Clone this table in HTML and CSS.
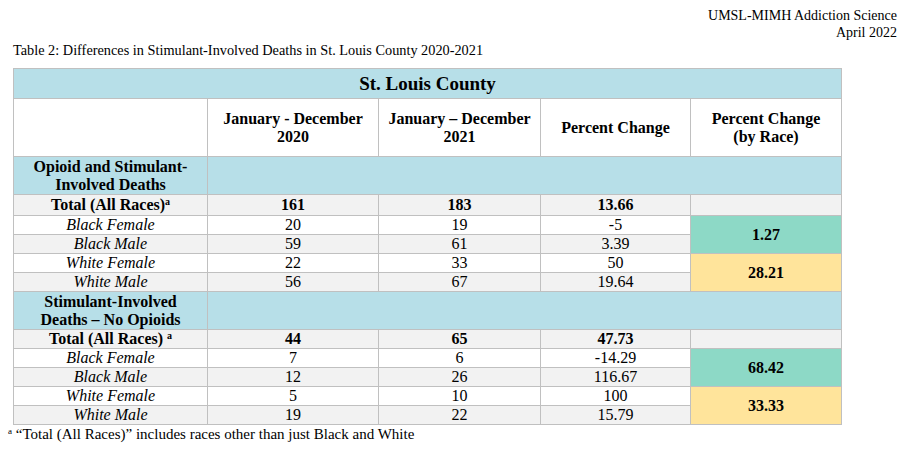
FILE: index.html
```html
<!DOCTYPE html>
<html>
<head>
<meta charset="utf-8">
<link rel="stylesheet" href="styles.css">
</head>
<body>
<div class="org">
  <div>UMSL-MIMH Addiction Science</div>
  <div>April 2022</div>
</div>
<div class="caption">Table 2: Differences in Stimulant-Involved Deaths in St. Louis County 2020-2021</div>
<table class="data">
  <colgroup>
    <col class="c1"><col class="c2"><col class="c3"><col class="c4"><col class="c5">
  </colgroup>
  <tr class="title"><td colspan="5">St. Louis County</td></tr>
  <tr class="head">
    <td></td>
    <td>January - December<br>2020</td>
    <td>January – December<br>2021</td>
    <td>Percent Change</td>
    <td>Percent Change<br>(by Race)</td>
  </tr>
  <tr class="section">
    <td>Opioid and Stimulant-<br>Involved Deaths</td>
    <td colspan="4"></td>
  </tr>
  <tr class="total t1">
    <td>Total (All Races)<sup>a</sup></td><td>161</td><td>183</td><td>13.66</td><td class="blank"></td>
  </tr>
  <tr class="row w"><td class="lab">Black Female</td><td>20</td><td>19</td><td>-5</td><td rowspan="2" class="race teal">1.27</td></tr>
  <tr class="row g"><td class="lab">Black Male</td><td>59</td><td>61</td><td>3.39</td></tr>
  <tr class="row w"><td class="lab">White Female</td><td>22</td><td>33</td><td>50</td><td rowspan="2" class="race yellow">28.21</td></tr>
  <tr class="row g"><td class="lab">White Male</td><td>56</td><td>67</td><td>19.64</td></tr>
  <tr class="section">
    <td>Stimulant-Involved<br>Deaths – No Opioids</td>
    <td colspan="4"></td>
  </tr>
  <tr class="total">
    <td>Total (All Races) <sup>a</sup></td><td>44</td><td>65</td><td>47.73</td><td class="blank"></td>
  </tr>
  <tr class="row w"><td class="lab">Black Female</td><td>7</td><td>6</td><td>-14.29</td><td rowspan="2" class="race teal">68.42</td></tr>
  <tr class="row g"><td class="lab">Black Male</td><td>12</td><td>26</td><td>116.67</td></tr>
  <tr class="row w"><td class="lab">White Female</td><td>5</td><td>10</td><td>100</td><td rowspan="2" class="race yellow">33.33</td></tr>
  <tr class="row g"><td class="lab">White Male</td><td>19</td><td>22</td><td>15.79</td></tr>
</table>
<div class="note"><sup>a</sup> “Total (All Races)” includes races other than just Black and White</div>
</body>
</html>
```
FILE: styles.css
```css
html, body {
  margin: 0;
  padding: 0;
  background: #fff;
}
body, .org, .caption, .data, .data td, .note {
  font-family: "Liberation Serif", Tinos, serif;
}
body {
  color: #000;
  font-size: 15px;
}
.org {
  text-align: right;
  padding: 7px 18px 0 0;
  line-height: 17px;
  font-size: 14px;
}
.caption {
  padding: 0 0 0 13px;
  font-size: 14.3px;
  line-height: 17px;
  height: 17px;
  margin-top: 1px;
  margin-bottom: 9px;
}
.data {
  margin: 0 0 0 13px;
  border-collapse: collapse;
  table-layout: fixed;
  width: 828px;
}
.c1 { width: 194px; }
.c2 { width: 171px; }
.c3 { width: 162px; }
.c4 { width: 150px; }
.c5 { width: 151px; }
.data td {
  border: 1px solid #c0c0c0;
  text-align: center;
  vertical-align: middle;
  padding: 0;
  line-height: 18px;
  font-size: 16px;
}
.title td {
  background: #b7dfe8;
  font-weight: bold;
  font-size: 19px;
  height: 29px;
}
.head td {
  background: #fff;
  font-weight: bold;
  height: 57px;
}
.section td {
  background: #b7dfe8;
  font-weight: bold;
  height: 37px;
}
.total td {
  background: #f2f2f2;
  font-weight: bold;
  height: 18px;
}
.t1 td { height: 20px; }
.total sup {
  font-size: 10px;
  line-height: 0;
  vertical-align: 5px;
}
.row td { height: 18px; }
.row.w td { background: #fff; }
.row.g td { background: #f2f2f2; }
.row td.lab {
  font-style: italic;
}
.row td.race {
  font-weight: bold;
}
.row td.teal { background: #8dd9c6; }
.row td.yellow { background: #ffe49b; }
.note {
  padding: 1px 0 0 8px;
  font-size: 15px;
  line-height: 17px;
}
.note sup {
  font-size: 9px;
  line-height: 0;
  vertical-align: 5px;
}
```
